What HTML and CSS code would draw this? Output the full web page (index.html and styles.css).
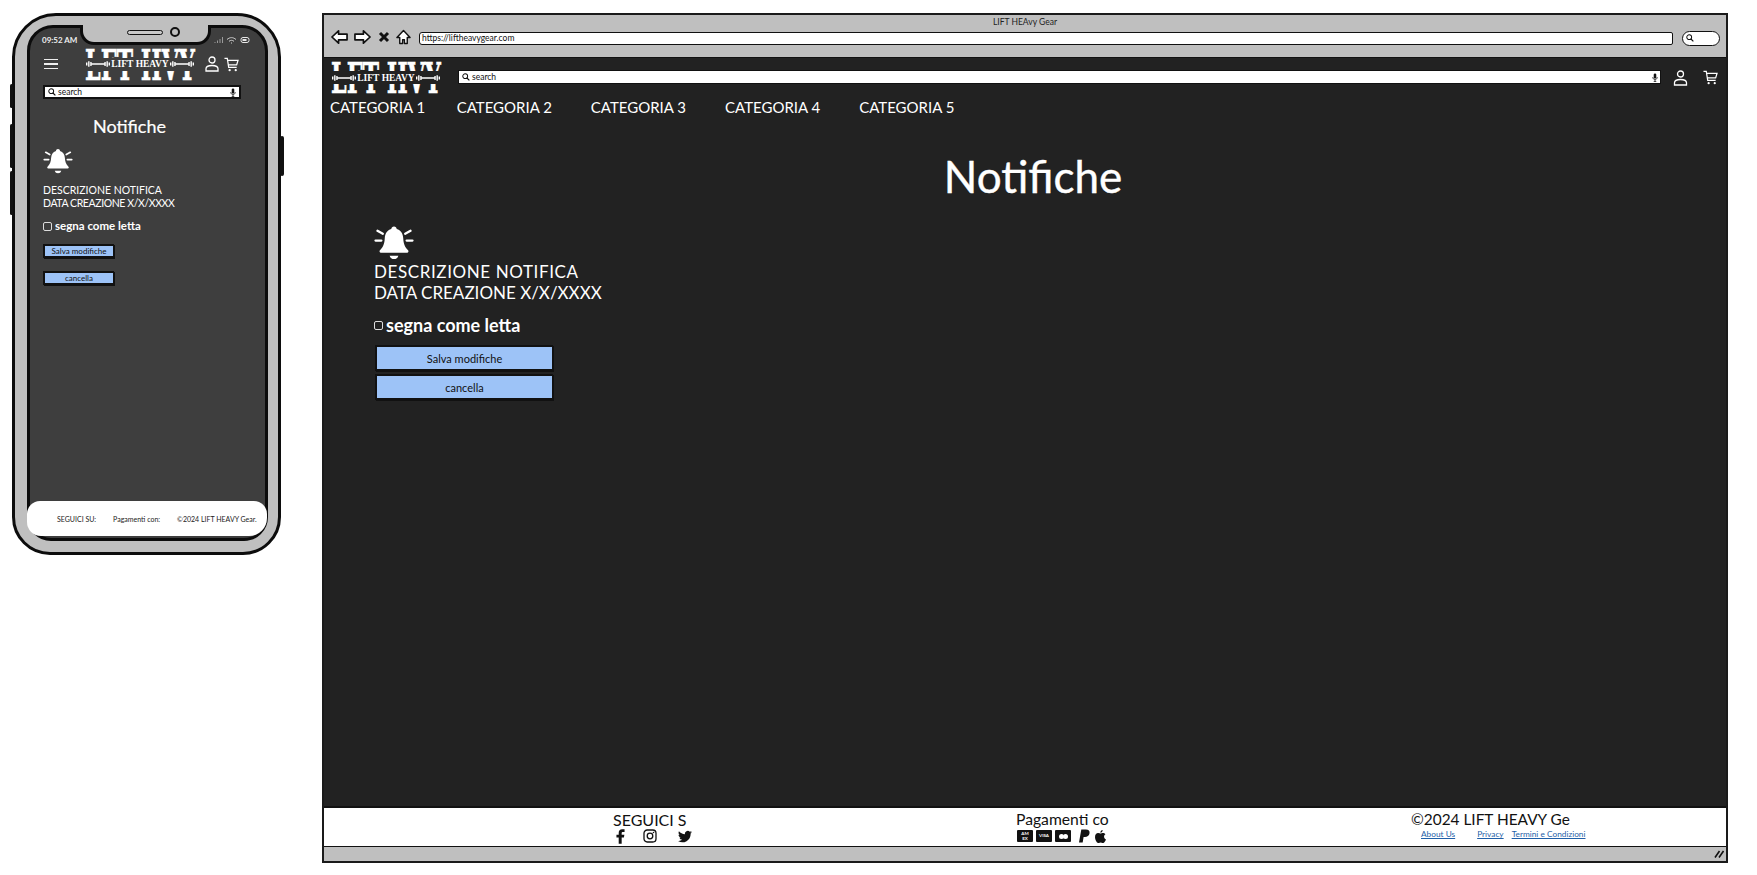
FILE: index.html
```html
<!DOCTYPE html>
<html lang="it">
<head>
<meta charset="utf-8">
<title>LIFT HEAVY Gear</title>
<link rel="stylesheet" href="styles.css">
</head>
<body>
<svg class="defs" width="0" height="0" aria-hidden="true">
  <defs>
    <symbol id="bell" viewBox="0 0 40 36">
      <path d="M20 1.500c1.600 0 2.600 1 2.800 2.600 4.200 1.200 6.400 4.600 6.700 9.400.3 5.500 1.500 9 5 12.500.8.900.4 2.500-1 2.500H6.500c-1.400 0-1.800-1.600-1-2.500 3.500-3.500 4.700-7 5-12.500.3-4.800 2.500-8.200 6.700-9.400.2-1.600 1.200-2.600 2.800-2.600z" fill="currentColor"/>
      <path d="M15.500 31.500h9c-.6 2.300-2.300 3.500-4.500 3.500s-3.900-1.200-4.500-3.500z" fill="currentColor"/>
      <path d="M3 6l5.500 3M37 6l-5.500 3M1 16h6M39 16h-6" stroke="currentColor" stroke-width="2.400" stroke-linecap="round" fill="none"/>
    </symbol>
    <symbol id="user" viewBox="0 0 14 16">
      <circle cx="7" cy="4" r="3" fill="none" stroke="currentColor" stroke-width="1.300"/>
      <path d="M1 15v-2.200C1 10.500 3 9.500 7 9.500s6 1 6 3.300V15z" fill="none" stroke="currentColor" stroke-width="1.300"/>
    </symbol>
    <symbol id="cart" viewBox="0 0 16 16">
      <path d="M.5 1.500h3L5 11h8.500M4 3.500h11L13.500 8.500H4.800" fill="none" stroke="currentColor" stroke-width="1.300"/>
      <circle cx="6" cy="14" r="1.200" fill="currentColor"/>
      <circle cx="12.500" cy="14" r="1.200" fill="currentColor"/>
    </symbol>
    <symbol id="lens" viewBox="0 0 10 10">
      <circle cx="4" cy="4" r="3" fill="none" stroke="currentColor" stroke-width="1.300"/>
      <path d="M6.200 6.200L9.200 9.200" stroke="currentColor" stroke-width="1.500"/>
    </symbol>
    <symbol id="mic" viewBox="0 0 8 12">
      <rect x="2.300" y=".5" width="3.400" height="7" rx="1.700" fill="currentColor"/>
      <path d="M1 5.500c0 2 1.200 3.200 3 3.200s3-1.200 3-3.200M4 9v2M2.300 11.300h3.400" fill="none" stroke="currentColor"/>
    </symbol>
    <symbol id="bar" viewBox="0 0 34 10">
      <path d="M1 3v4M27 2v6M30 1v8M33 3v4M7 2v6M4 1v8M8 5h18" stroke="currentColor" stroke-width="2" fill="none"/>
    </symbol>
  </defs>
</svg>

<section class="phone">
  <span class="side side-a"></span>
  <span class="side side-b"></span>
  <span class="side side-c"></span>
  <span class="side side-d"></span>
  <div class="screen">
    <div class="notch"><span class="speaker"></span><span class="camera"></span></div>
    <div class="status">
      <span class="clock">09:52 AM</span>
      <svg class="status-icons" viewBox="0 0 36 8">
        <path d="M1 7V6M3.500 7V4.500M6 7V3M8.500 7V1" stroke="#9a9a9a" fill="none"/>
        <path d="M13 3.500c3-2.500 6-2.500 9 0M15 5.300c1.800-1.300 3.200-1.300 5 0M17 7h1" stroke="#cfcfcf" fill="none"/>
        <rect x="27" y="1.500" width="8" height="5" rx="2" fill="none" stroke="#e8e8e8"/>
        <rect x="28.500" y="3" width="4" height="2" fill="#e8e8e8"/>
      </svg>
    </div>
    <header class="phone-head">
      <span class="burger"><i></i><i></i><i></i></span>
      <div class="logo">
        <svg class="logo-big" viewBox="0 0 110 33"><text x="0" y="32" textLength="110" lengthAdjust="spacingAndGlyphs">LFT HVY</text></svg>
        <span class="logo-band"><svg class="bar"><use href="#bar"/></svg><b>LIFT HEAVY</b><svg class="bar"><use href="#bar"/></svg></span>
      </div>
      <svg class="ico-user"><use href="#user"/></svg>
      <svg class="ico-cart"><use href="#cart"/></svg>
    </header>
    <div class="search phone-search">
      <svg class="lens"><use href="#lens"/></svg><span>search</span>
      <svg class="mic"><use href="#mic"/></svg>
    </div>
    <main class="phone-main">
      <h2 class="phone-title">Notifiche</h2>
      <svg class="phone-bell"><use href="#bell"/></svg>
      <p class="phone-desc">DESCRIZIONE NOTIFICA<br><span class="tight">DATA CREAZIONE X/X/XXXX</span></p>
      <label class="phone-check"><span class="box"></span>segna come letta</label>
      <button class="btn phone-btn">Salva modifiche</button>
      <button class="btn phone-btn">cancella</button>
    </main>
    <footer class="phone-foot">
      <span>SEGUICI SU:</span>
      <span>Pagamenti con:</span>
      <span>©2024 LIFT HEAVY Gear.</span>
    </footer>
  </div>
</section>

<section class="browser">
  <div class="chrome">
    <div class="win-title">LIFT HEAvy Gear</div>
    <div class="toolbar">
      <div class="nav-group">
        <svg class="nav-ico" viewBox="0 0 18 16"><path d="M1 8l7-6.500V5h9v6H8v3.500z" fill="#fff" stroke="#111" stroke-width="1.800" stroke-linejoin="round"/></svg>
        <svg class="nav-ico" viewBox="0 0 18 16"><path d="M17 8l-7-6.500V5H1v6h9v3.500z" fill="#fff" stroke="#111" stroke-width="1.800" stroke-linejoin="round"/></svg>
        <svg class="nav-x" viewBox="0 0 12 12"><path d="M2 2l8 8M10 2l-8 8" stroke="#111" stroke-width="3"/></svg>
        <svg class="nav-home" viewBox="0 0 16 16"><path d="M8 1L1 8.500h3V15h3v-4h2v4h3V8.500h3z" fill="#fff" stroke="#111" stroke-width="1.500" stroke-linejoin="round"/></svg>
      </div>
      <div class="url">https://liftheavygear.com</div>
      <div class="pill"><svg class="lens"><use href="#lens"/></svg></div>
    </div>
  </div>
  <div class="page">
    <header class="page-head">
      <div class="logo">
        <svg class="logo-big" viewBox="0 0 110 33"><text x="0" y="32" textLength="110" lengthAdjust="spacingAndGlyphs">LFT HVY</text></svg>
        <span class="logo-band"><svg class="bar"><use href="#bar"/></svg><b>LIFT HEAVY</b><svg class="bar"><use href="#bar"/></svg></span>
      </div>
      <div class="search page-search">
        <svg class="lens"><use href="#lens"/></svg><span>search</span>
        <svg class="mic"><use href="#mic"/></svg>
      </div>
      <svg class="ico-user"><use href="#user"/></svg>
      <svg class="ico-cart"><use href="#cart"/></svg>
    </header>
    <nav class="cats">
      <a>CATEGORIA 1</a><a>CATEGORIA 2</a><a>CATEGORIA 3</a><a>CATEGORIA 4</a><a>CATEGORIA 5</a>
    </nav>
    <h1 class="page-title">Notifiche</h1>
    <div class="notice">
      <svg class="page-bell"><use href="#bell"/></svg>
      <p class="page-desc"><span class="wide">DESCRIZIONE NOTIFICA</span><br>DATA CREAZIONE X/X/XXXX</p>
      <label class="page-check"><span class="box"></span>segna come letta</label>
      <button class="btn page-btn">Salva modifiche</button>
      <button class="btn page-btn">cancella</button>
    </div>
  </div>
  <footer class="page-foot">
    <div class="foot-col col-social">
      <div class="foot-head">SEGUICI S</div>
      <div class="foot-icons social">
        <svg viewBox="0 0 10 16" class="fb"><path d="M3 16V9H.500V6H3V4c0-2.500 1.400-4 3.800-4H9.500v3H7.800C6.700 3 6.300 3.500 6.300 4.500V6h3l-.5 3H6.300v7z" fill="#111"/></svg>
        <svg viewBox="0 0 14 14" class="ig"><rect x="1" y="1" width="12" height="12" rx="3.200" fill="none" stroke="#111" stroke-width="1.300"/><circle cx="7" cy="7" r="2.800" fill="none" stroke="#111" stroke-width="1.300"/><circle cx="10.500" cy="3.500" r=".8" fill="#111"/></svg>
        <svg viewBox="0 0 16 13" class="tw"><path d="M16 1.600c-.6.300-1.200.4-1.900.5.700-.4 1.200-1 1.400-1.800-.6.400-1.300.6-2 .8A3.300 3.300 0 0 0 7.900 4C5.200 3.900 2.800 2.600 1.100.6c-.9 1.500-.4 3.400 1 4.400-.5 0-1-.2-1.500-.4 0 1.600 1.100 3 2.600 3.300-.5.100-1 .2-1.500.1.400 1.300 1.600 2.200 3.100 2.300A6.600 6.600 0 0 1 0 11.500 9.300 9.300 0 0 0 14.400 3.200c.6-.4 1.200-1 1.600-1.600z" fill="#111"/></svg>
      </div>
    </div>
    <div class="foot-col col-pay">
      <div class="foot-head">Pagamenti co</div>
      <div class="foot-icons pay">
        <span class="card card-amex">AM<br>EX</span>
        <span class="card">VISA</span>
        <span class="card card-mc"><i></i><i></i></span>
        <svg viewBox="0 0 12 14" class="pp"><path d="M2.500 0h5C10.500 0 12 1.500 11.500 4c-.5 2.800-2.500 4-5 4H5l-1 6H0z" fill="#111"/></svg>
        <svg viewBox="0 0 12 14" class="ap"><path d="M8.300 0c.1 1.500-1 2.800-2.400 2.800C5.800 1.400 7 .1 8.300 0zM6 3.800c.7 0 1.500-.6 2.700-.6 1 0 2 .5 2.700 1.400-2.300 1.300-1.900 4.600.6 5.600-.6 1.600-2 4-3.300 4-.9 0-1.300-.6-2.500-.6s-1.700.6-2.500.6C2 14.200 0 10.500 0 7.700 0 5 1.700 3.300 3.400 3.300c1.100 0 2 .5 2.600.5z" fill="#111"/></svg>
      </div>
    </div>
    <div class="foot-col col-copy">
      <div class="foot-head">©2024 LIFT HEAVY Ge</div>
      <div class="links"><a>About Us</a><a>Privacy</a><a>Termini e Condizioni</a></div>
    </div>
  </footer>
  <div class="statusbar"><svg class="grip" viewBox="0 0 10 8"><path d="M1 7.500L5.500 1M5 7.500L9.500 1" stroke="#111" stroke-width="1.600"/></svg></div>
</section>
</body>
</html>
```
FILE: styles.css
```css
* { box-sizing: border-box; }
html, body { margin: 0; height: 100%; background: #fff; overflow: hidden; }
body { position: relative; font-family: "Lato", "Liberation Sans", sans-serif; color: #fff; }
.defs { position: absolute; }
p, h1, h2 { margin: 0; font-weight: 400; }
svg { display: block; }

/* phone */
.phone {
  position: absolute; left: 12px; top: 13px; width: 269px; height: 542px;
  background: #bfbfbf; border: 3px solid #0c0c0c; border-radius: 44px 44px 38px 38px;
  padding: 9px 10px 11px 12px;
}
.side { position: absolute; width: 3px; background: #111; border-radius: 2px; left: -5px; }
.side-a { top: 68px; height: 24px; }
.side-b { top: 108px; height: 44px; }
.side-c { top: 155px; height: 44px; }
.side-d { left: auto; right: -6px; top: 120px; height: 40px; width: 4px; }
.screen {
  position: relative; height: 100%; background: #3e3e3e;
  border: 3px solid #0c0c0c; border-radius: 26px 26px 24px 24px;
  display: flex; flex-direction: column;
}
.notch {
  position: absolute; left: 50px; top: -3px; width: 131px; height: 20px;
  background: #bfbfbf; border: 3px solid #0c0c0c; border-top: 0; border-radius: 0 0 14px 14px;
  display: flex; align-items: center; justify-content: center; gap: 7px; padding: 0 0 3px 16px;
}
.speaker { width: 36px; height: 5px; border: 1.500px solid #111; border-radius: 3px; background: #c8c8c8; }
.camera { width: 10px; height: 10px; border: 2px solid #111; border-radius: 50%; }
.status { display: flex; justify-content: space-between; align-items: center; padding: 4px 15px 0 12px; height: 20px; }
.clock { font-size: 8px; font-weight: 700; color: #eee; }
.status-icons { width: 36px; height: 8px; }
.phone-head { display: flex; align-items: center; height: 32px; padding-left: 14px; margin-top: 0; }
.burger { display: flex; flex-direction: column; gap: 3px; width: 14px; margin-right: 27px; }
.burger i { display: block; height: 1.500px; background: #eee; }
.phone-head .ico-user { margin-left: 10px; margin-right: 5px; }
.search {
  display: flex; align-items: center; background: #fff; color: #111;
  border: 2px solid #111; font-size: 8.500px; font-family: "Lato", sans-serif; gap: 2px;
}
.search .mic { margin-left: auto; }
.phone-search { height: 14px; margin: 5px 24px 0 13px; padding: 0 3px; }
.lens { width: 8px; height: 8px; color: #111; flex: none; }
.mic { width: 6px; height: 9px; color: #111; flex: none; }
.ico-user { width: 14px; height: 16px; color: #fff; flex: none; }
.ico-cart { width: 15px; height: 15px; color: #fff; flex: none; }

.logo { position: relative; width: 110px; height: 33px; flex: none; }
.logo-big { width: 110px; height: 33px; overflow: visible; }
.logo-big text {
  font-family: "DejaVu Serif", serif; font-weight: 700; font-size: 43px; fill: #fff; stroke: #fff; stroke-width: .6px;
}
.logo-band {
  position: absolute; left: 0; right: 0; top: 10px; height: 13px; display: flex; align-items: center; justify-content: space-between;
  background: #222; font-family: "Liberation Serif", serif;
}
.phone .logo-band { background: #3e3e3e; }
.logo-band b { font-size: 9.500px; letter-spacing: 0; color: #fff; font-weight: 700; white-space: nowrap; }
.bar { width: 24px; height: 8px; color: #fff; flex: none; margin: 0 1px; }

.phone-main { flex: 1; padding: 0 0 0 13px; display: flex; flex-direction: column; align-items: flex-start; }
.phone-title { align-self: center; margin: 16px 49px 0 0; font-size: 18px; line-height: 22px; color: #fff; -webkit-text-stroke: .2px #fff; }
.phone-bell { width: 30px; height: 26px; margin-top: 11px; color: #fff; }
.phone-desc { margin-top: 10px; font-size: 10.500px; line-height: 13px; }
.tight { letter-spacing: -.4px; }
.phone-check { display: flex; align-items: center; margin-top: 9px; font-size: 11.500px; line-height: 14px; font-weight: 700; }
.box { display: block; background: transparent; border: 1.500px solid #ddd; border-radius: 2px; }
.phone-check .box { width: 9px; height: 9px; margin-right: 3px; }
.btn {
  display: block; background: #9dc3f7; color: #111; border: 1px solid #111; border-right-width: 2px; border-bottom-width: 3px;
  box-shadow: -1px -1px 0 #111; font-family: "Lato", sans-serif; padding: 0;
}
.phone-btn { width: 71px; height: 14px; font-size: 8px; line-height: 10px; margin: 12px 0 0 1px; }
.phone-btn + .phone-btn { margin-top: 13px; }
.phone-foot {
  position: relative; flex: none; height: 35px; margin: 0 -2px 2px -3px; background: #fff; color: #222;
  border-radius: 13px 13px 18px 14px; display: flex; align-items: center; gap: 17px; padding: 0 0 0 30px; font-size: 7px; white-space: nowrap;
}

/* browser */
.browser {
  position: absolute; left: 322px; top: 13px; width: 1406px; height: 850px;
  border: 2px solid #1a1a1a; background: #222; display: flex; flex-direction: column;
}
.chrome { height: 43px; background: #bfbfbf; border-bottom: 1px solid #111; flex: none; }
.win-title { text-align: center; font-size: 8.500px; line-height: 10px; color: #222; padding-top: 2px; height: 12px; }
.toolbar { display: flex; align-items: center; padding: 0 6px 0 7px; height: 20px; margin-top: 1px; }
.nav-group { display: flex; align-items: center; margin-bottom: 3px; }
.nav-ico { width: 17px; height: 16px; margin-right: 6px; }
.nav-x { width: 12px; height: 12px; margin: 0 6px 0 1px; }
.nav-home { width: 15px; height: 16px; margin-right: 8px; }
.url {
  flex: 1; height: 13px; background: #fff; border: 1.500px solid #111; border-radius: 3px 2px 2px 3px;
  color: #111; font-size: 8.500px; line-height: 10px; padding-left: 2px;
}
.pill { width: 38px; height: 15px; background: #fff; border: 1.500px solid #111; border-radius: 8px; margin-left: 9px; padding: 2px 0 0 3px; }
.page { flex: 1; display: flex; flex-direction: column; background: #222; }
.page-head { display: flex; align-items: center; height: 33px; margin-top: 3px; padding-left: 7px; }
.page-search { flex: 1; height: 14px; margin: -1px 0 0 17px; padding: 0 2px 0 3px; border: 1px solid #111; }
.page-head .ico-user { width: 15px; height: 16px; margin-left: 12px; margin-right: 15px; }
.page-head .ico-cart { margin-right: 8px; }
.cats { display: flex; gap: 39px; margin-top: 3px; padding-left: 6px; font-size: 15px; line-height: 20px; }
.cats a:first-child { margin-right: -7.500px; }
.page-title { text-align: center; font-size: 44px; line-height: 52px; margin-top: 33px; padding-left: 16px; -webkit-text-stroke: .4px #fff; }
.notice { display: flex; flex-direction: column; align-items: flex-start; padding-left: 50px; margin-top: 23px; }
.page-bell { width: 40px; height: 35px; color: #fff; }
.page-desc { font-size: 17px; line-height: 21px; margin-top: 1px; }
.wide { letter-spacing: .6px; }
.page-check { display: flex; align-items: center; margin-top: 11px; font-size: 18px; line-height: 22px; font-weight: 700; }
.page-check .box { width: 9px; height: 9px; margin-right: 3px; }
.page-btn { width: 178px; height: 26px; font-size: 11px; margin: 10px 0 0 2px; }
.page-btn + .page-btn { margin-top: 3px; }

.page-foot { position: relative; height: 41px; background: #fff; color: #111; border-top: 2px solid #111; border-bottom: 1px solid #111; flex: none; display: grid; grid-template-columns: 400px 500px 1fr; }
.foot-col { display: flex; flex-direction: column; padding-top: 3px; }
.foot-head { font-size: 15.400px; line-height: 17px; white-space: nowrap; }
.col-social { padding-left: 289px; }
.col-social .foot-head { font-size: 16px; }
.col-pay { padding-left: 292px; }
.col-pay .foot-head { font-size: 15.700px; }
.col-copy { padding-left: 187px; }
.foot-icons { display: flex; align-items: center; height: 16px; }
.social .fb { width: 9px; height: 15px; margin-left: 3px; }
.social .ig { width: 14px; height: 14px; margin-left: 18px; }
.social .tw { width: 14px; height: 13px; margin-left: 21px; }
.pay { padding-left: 1px; }
.card { display: block; width: 16px; height: 12px; background: #111; color: #fff; font-size: 4.500px; line-height: 12px; text-align: center; border-radius: 1px; margin-right: 3px; font-weight: 700; }
.card-amex { line-height: 5px; padding-top: 1px; }
.card-mc { display: flex; align-items: center; justify-content: center; gap: 0; margin-right: 8px; }
.card-mc i { width: 5px; height: 5px; background: #fff; border-radius: 50%; margin: 0 -.5px; }
.pay .pp { width: 11px; height: 14px; margin-right: 5px; }
.pay .ap { width: 11px; height: 13px; }
.links { display: flex; font-size: 8.300px; line-height: 12px; color: #1f5fa8; padding-left: 10px; }
.links a { text-decoration: underline; }
.links a:nth-child(1) { margin-right: 22px; }
.links a:nth-child(2) { margin-right: 8px; }
.statusbar { height: 14px; background: #bfbfbf; flex: none; display: flex; align-items: center; justify-content: flex-end; padding-right: 2px; }
.grip { width: 10px; height: 8px; }
```
